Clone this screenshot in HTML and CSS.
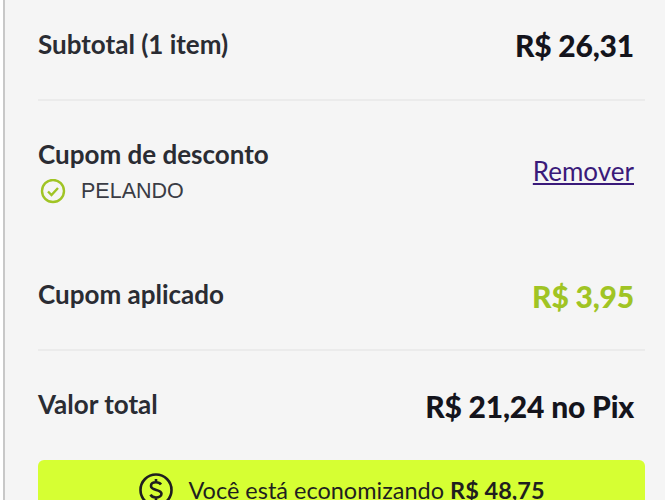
FILE: index.html
```html
<!DOCTYPE html>
<html lang="pt-BR">
<head>
<meta charset="utf-8">
<title>Resumo</title>
<link rel="stylesheet" href="styles.css">
</head>
<body>
<div class="summary">
  <div class="row row-first">
    <span class="label">Subtotal (1 item)</span>
    <span class="price">R$ 26,31</span>
  </div>
  <div class="row row-coupon">
    <div>
      <div class="label">Cupom de desconto</div>
      <div class="code">
        <svg width="26" height="26" viewBox="0 0 26 26" fill="none" stroke="#a0c424" stroke-width="2.4"><circle cx="13" cy="12" r="11"/><path d="M8 12.500l3.500 3.500 6.500-7"/></svg>
        <span>PELANDO</span>
      </div>
    </div>
    <a class="remove" href="#">Remover</a>
  </div>
  <div class="row row-applied">
    <span class="label">Cupom aplicado</span>
    <span class="price green">R$ 3,95</span>
  </div>
  <div class="row row-total">
    <span class="label">Valor total</span>
    <span class="price">R$ 21,24 no Pix</span>
  </div>
  <div class="saving">
    <svg width="36" height="36" viewBox="0 0 36 36" fill="none" stroke="#1f1f1f" stroke-width="2.6"><circle cx="18" cy="18" r="15.500"/><path d="M23 12.500c-1-1.500-2.800-2.200-5-2.200-3 0-5 1.500-5 3.700 0 5 10.500 2.800 10.500 7.800 0 2.300-2.500 3.700-5.500 3.700-2.300 0-4.500-.8-5.500-2.800M18 7v3.300M18 25.500v3.500"/></svg>
    <span>Você está economizando <b>R$ 48,75</b></span>
  </div>
</div>
</body>
</html>
```
FILE: styles.css
```css
html, body {
  margin: 0;
  height: 500px;
  overflow: hidden;
  background: #fff;
}
.summary {
  box-sizing: border-box;
  height: 500px;
  margin-left: 3px;
  padding: 0 20px 0 33px;
  background: #f5f5f5;
  border-left: 2px solid #c8c8c8;
  font-family: Lato, sans-serif;
  color: #1f1f1f;
  overflow: hidden;
}
.row {
  display: flex;
  justify-content: space-between;
  align-items: center;
  padding-right: 11px;
}
.row .label {
  margin-bottom: 2px;
}
.row-first {
  box-sizing: border-box;
  height: 101px;
  padding-bottom: 9px;
  border-bottom: 2px solid #ebebeb;
}
.row-coupon {
  height: 140px;
}
.row-applied {
  box-sizing: border-box;
  height: 110px;
  padding-top: 2px;
  border-bottom: 2px solid #ebebeb;
}
.row-applied .label,
.row-total .label {
  margin-bottom: 4px;
}
.row-total {
  height: 109px;
}
.label {
  font-size: 26px;
  font-weight: 700;
  letter-spacing: 0;
  color: #2a2c33;
}
.price {
  font-size: 30px;
  font-weight: 900;
  letter-spacing: -0.2px;
  color: #14141c;
}
.green {
  color: #a0c424;
}
.code {
  display: flex;
  align-items: center;
  gap: 15px;
  margin-top: 9px;
  padding-left: 2px;
  font-family: "Liberation Sans", sans-serif;
  font-size: 21.500px;
  color: #3a3c44;
}
.remove {
  font-size: 26px;
  color: #3a1a7a;
}
.saving {
  display: flex;
  justify-content: center;
  align-items: center;
  gap: 14px;
  height: 70px;
  padding-bottom: 10px;
  box-sizing: border-box;
  background: #d6ff33;
  border-radius: 6px;
  font-size: 23.500px;
}
```
